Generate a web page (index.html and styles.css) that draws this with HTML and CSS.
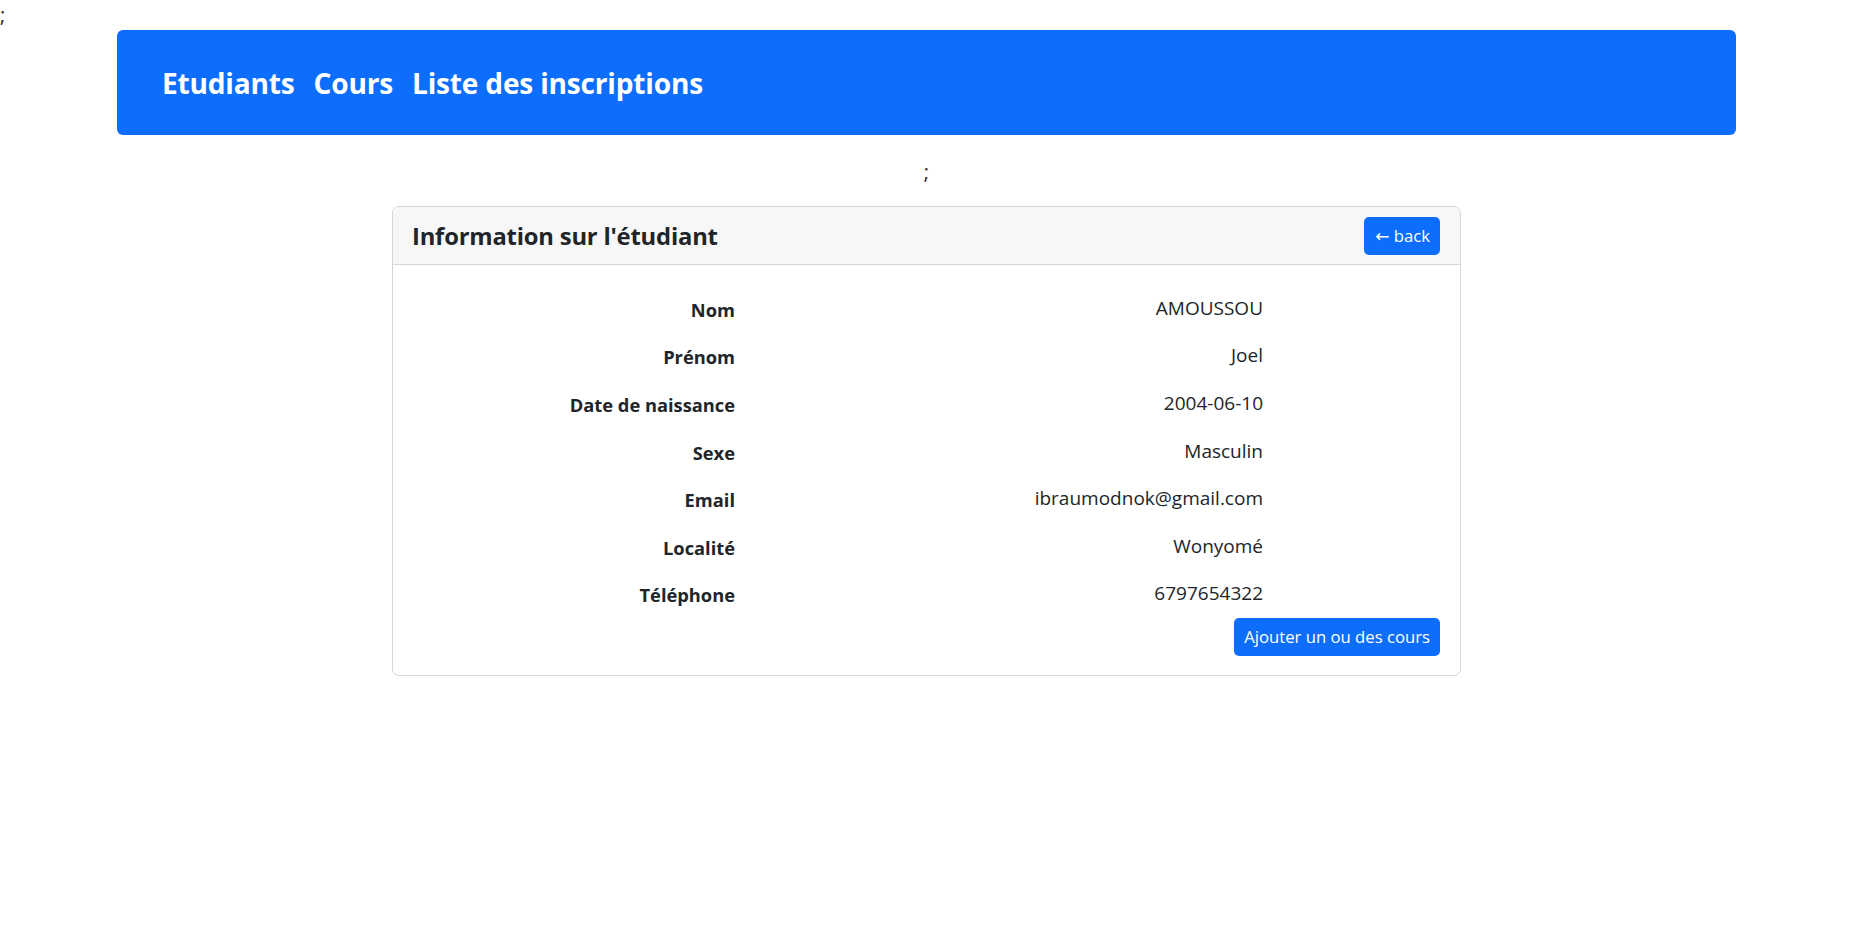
FILE: index.html
```html
<!DOCTYPE html>
<html lang="fr">
<head>
<meta charset="utf-8">
<title>Information sur l'étudiant</title>
<link rel="stylesheet" href="styles.css">
</head>
<body>
<p class="semi">;</p>
<nav class="navbar">
  <a class="nav-link" href="#">Etudiants</a>
  <a class="nav-link" href="#">Cours</a>
  <a class="nav-link" href="#">Liste des inscriptions</a>
</nav>
<p class="semi semi-center">;</p>
<div class="card">
  <div class="card-header">
    <h5 class="card-title">Information sur l'étudiant</h5>
    <a class="btn btn-sm" href="#"><span class="arrow">←</span> back</a>
  </div>
  <div class="card-body">
    <dl class="info">
      <div class="info-row"><dt>Nom</dt><dd>AMOUSSOU</dd></div>
      <div class="info-row"><dt>Prénom</dt><dd>Joel</dd></div>
      <div class="info-row"><dt>Date de naissance</dt><dd>2004-06-10</dd></div>
      <div class="info-row"><dt>Sexe</dt><dd>Masculin</dd></div>
      <div class="info-row"><dt>Email</dt><dd>ibraumodnok@gmail.com</dd></div>
      <div class="info-row"><dt>Localité</dt><dd>Wonyomé</dd></div>
      <div class="info-row"><dt>Téléphone</dt><dd>6797654322</dd></div>
    </dl>
    <div class="actions">
      <a class="btn" href="#">Ajouter un ou des cours</a>
    </div>
  </div>
</div>
</body>
</html>
```

FILE: styles.css
```css
* { box-sizing: border-box; }

body {
  margin: 0;
  font-family: "Open Sans", "Noto Sans", "Liberation Sans", sans-serif;
  font-size: 19px;
  line-height: 30px;
  color: #212529;
  background: #fff;
}

.semi {
  margin: 0;
  height: 30px;
  line-height: 30px;
  font-size: 20px;
}

.semi-center {
  text-align: center;
  margin: 22px 0 19px;
}

.navbar {
  width: 1619px;
  height: 105px;
  margin: 0 auto;
  padding: 0 45px;
  background: #0d6efd;
  border-radius: 6px;
  display: flex;
  align-items: center;
  gap: 19px;
}

.nav-link {
  color: #fff;
  text-decoration: none;
  font-weight: 700;
  font-size: 28.1px;
  line-height: 36px;
  letter-spacing: -0.2px;
}

.card {
  width: 1069px;
  margin: 0 auto;
  border: 1px solid #d5d5d6;
  border-radius: 7px;
  overflow: hidden;
}

.card-header {
  background: #f7f7f7;
  border-bottom: 1px solid #d5d5d6;
  height: 58px;
  padding: 0 20px 0 19px;
  display: flex;
  align-items: center;
  justify-content: space-between;
}

.card-title {
  margin: 0;
  font-size: 23.8px;
  font-weight: 700;
  line-height: 30px;
  letter-spacing: -0.2px;
}

.btn {
  display: inline-flex;
  align-items: center;
  height: 38px;
  padding: 0 10px;
  background: #0d6efd;
  color: #fff;
  text-decoration: none;
  border-radius: 5px;
  font-size: 16.7px;
  line-height: 26px;
  white-space: pre;
}

.btn-sm {
  padding: 0 10px 0 11px;
}

.arrow {
  font-family: "DejaVu Sans", sans-serif;
  font-size: 17px;
}

.card-body {
  padding: 19px 20px 19px 20px;
}

.info {
  margin: 0;
}

.info-row {
  display: grid;
  grid-template-columns: 322px 528px;
  height: 47.6px;
  align-items: center;
}

.info-row dt {
  font-weight: 700;
  font-size: 18.3px;
  text-align: right;
  padding-top: 4px;
}

.info-row dd {
  margin: 0;
  text-align: right;
}

.actions {
  display: flex;
  justify-content: flex-end;
  margin-top: 1px;
}
```
